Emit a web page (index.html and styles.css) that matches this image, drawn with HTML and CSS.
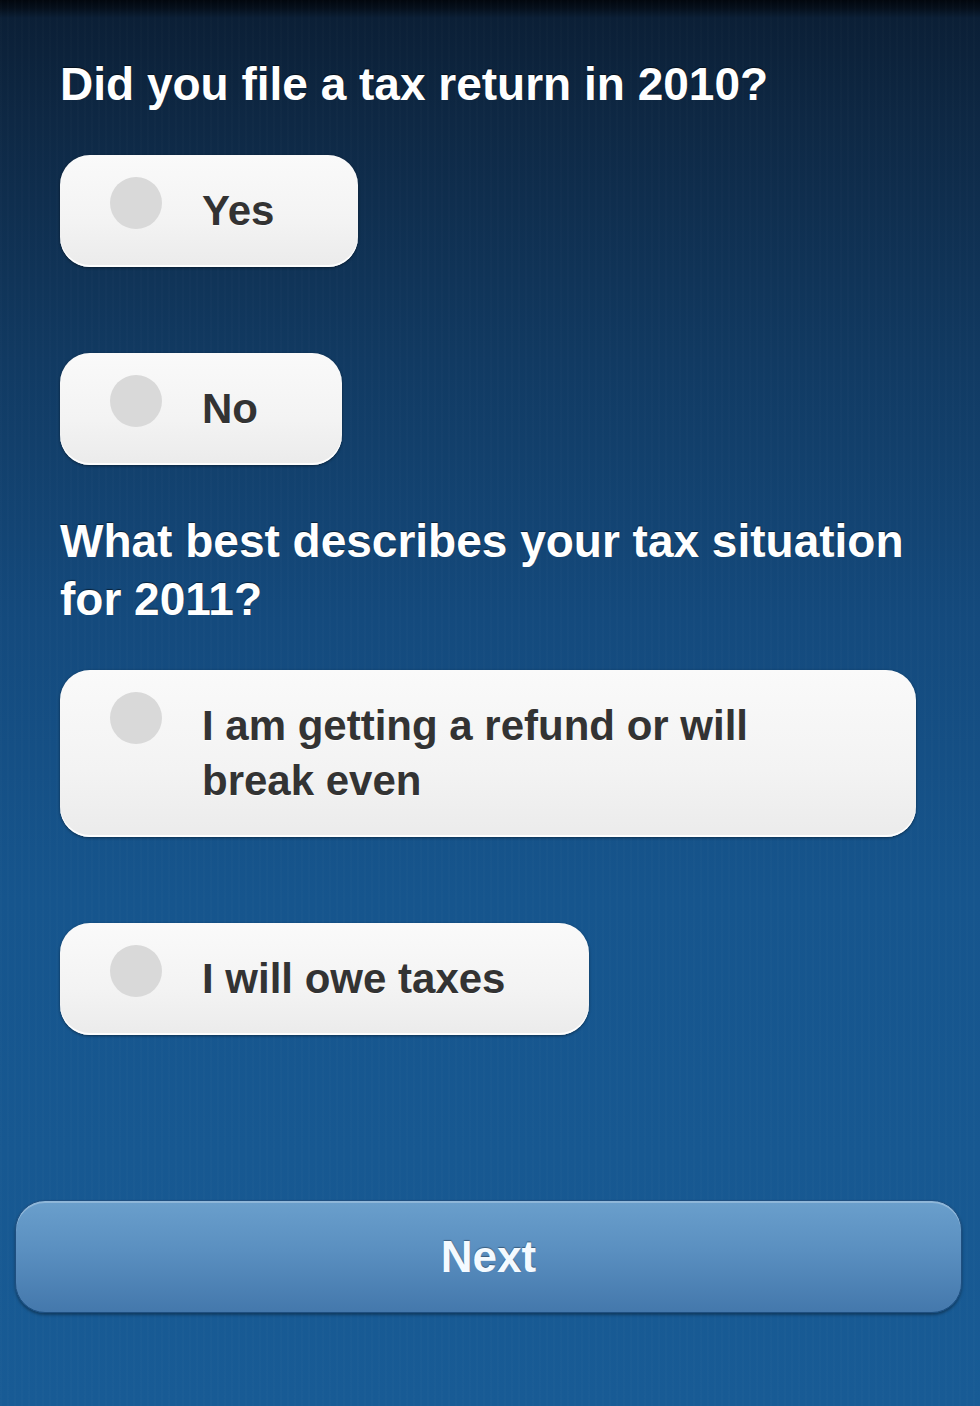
FILE: index.html
```html
<!DOCTYPE html>
<html lang="en">
<head>
    <meta charset="UTF-8">
    <meta name="viewport" content="width=device-width, initial-scale=1.0">
    <title>Tax Situation</title>
    <link rel="stylesheet" href="styles.css">
</head>
<body>
    <main class="screen">
        <section class="group group-first">
            <h2 class="question">Did you file a tax return in 2010?</h2>
            <div class="options">
                <button type="button" class="option"><span class="dot"></span><span class="label">Yes</span></button>
                <button type="button" class="option"><span class="dot"></span><span class="label">No</span></button>
            </div>
        </section>

        <section class="group">
            <h2 class="question">What best describes your tax situation for 2011?</h2>
            <div class="options">
                <button type="button" class="option"><span class="dot"></span><span class="label">I am getting a refund or will break even</span></button>
                <button type="button" class="option"><span class="dot"></span><span class="label">I will owe taxes</span></button>
            </div>
        </section>
    </main>

    <footer class="footer">
        <button type="button" class="next">Next</button>
    </footer>
</body>
</html>
```

FILE: styles.css
```css
* {
    box-sizing: border-box;
    margin: 0;
    padding: 0;
}

html, body {
    width: 100%;
    min-height: 100%;
}

body {
    min-height: 1406px;
    font-family: "Liberation Sans", Arial, Helvetica, sans-serif;
    background:
        repeating-linear-gradient(90deg, rgba(255, 255, 255, 0.01) 0 2px, rgba(0, 0, 0, 0) 2px 7px),
        linear-gradient(180deg, #02070e 0, #050f1b 8px, #0b1f36 18px, #0e2844 120px, #113a62 360px, #144a7d 620px, #16558d 900px, #185b95 1406px);
}

.screen {
    padding: 55px 64px 0 60px;
}

.group-first {
    margin-bottom: 47px;
}

.question {
    font-size: 46px;
    line-height: 58px;
    font-weight: bold;
    color: #ffffff;
    text-shadow: 0 -1px 1px rgba(0, 0, 0, 0.55);
    margin-bottom: 42px;
}

.options {
    display: flex;
    flex-direction: column;
    align-items: flex-start;
    gap: 86px;
}

.option {
    display: flex;
    align-items: flex-start;
    padding: 28px 84px 29px 50px;
    border: none;
    border-radius: 30px;
    background: linear-gradient(180deg, #fafafa 0%, #f3f3f3 60%, #ebebeb 100%);
    box-shadow: 0 1px 3px rgba(0, 0, 0, 0.45), inset 0 -2px 0 rgba(255, 255, 255, 0.9);
    font-family: inherit;
    text-align: left;
    cursor: pointer;
}

.dot {
    flex-shrink: 0;
    width: 52px;
    height: 52px;
    margin: -6px 40px 0 0;
    border-radius: 50%;
    background: #d9d9d9;
}

.label {
    font-size: 42px;
    line-height: 55px;
    font-weight: bold;
    color: #333333;
    text-shadow: 0 1px 0 rgba(255, 255, 255, 0.8);
}

.footer {
    padding: 165px 18px 0 15px;
}

.next {
    display: block;
    width: 100%;
    height: 113px;
    border: 1px solid #1f4f80;
    border-radius: 30px;
    background: linear-gradient(180deg, #6a9fcc 0%, #5a8fc0 45%, #4478ac 100%);
    box-shadow: inset 0 2px 0 rgba(255, 255, 255, 0.25), 0 2px 3px rgba(0, 0, 0, 0.35);
    font-family: inherit;
    font-size: 44px;
    font-weight: bold;
    color: #f4faff;
    text-shadow: 0 -1px 1px rgba(0, 0, 0, 0.35);
    cursor: pointer;
}
```
